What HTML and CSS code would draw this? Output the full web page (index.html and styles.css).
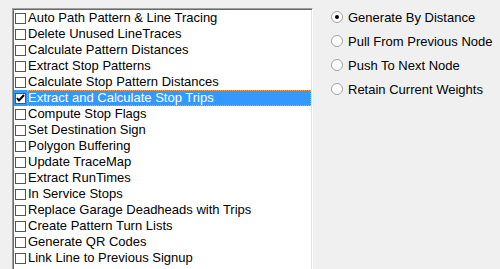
FILE: index.html
```html
<!DOCTYPE html>
<html>
<head>
<meta charset="utf-8">
<link rel="stylesheet" href="styles.css">
</head>
<body>
<div class="window">
  <div class="listbox">
    <div class="item"><span class="cb"></span><span class="label">Auto Path Pattern &amp; Line Tracing</span></div>
    <div class="item"><span class="cb"></span><span class="label">Delete Unused LineTraces</span></div>
    <div class="item"><span class="cb"></span><span class="label">Calculate Pattern Distances</span></div>
    <div class="item"><span class="cb"></span><span class="label">Extract Stop Patterns</span></div>
    <div class="item"><span class="cb"></span><span class="label">Calculate Stop Pattern Distances</span></div>
    <div class="item selected"><span class="cb checked"><svg width="9" height="9" viewBox="0 0 9 9"><path d="M1 4 L3 6.5 L8 1" fill="none" stroke="#000" stroke-width="2"/></svg></span><span class="label focus">Extract and Calculate Stop Trips</span></div>
    <div class="item"><span class="cb"></span><span class="label">Compute Stop Flags</span></div>
    <div class="item"><span class="cb"></span><span class="label">Set Destination Sign</span></div>
    <div class="item"><span class="cb"></span><span class="label">Polygon Buffering</span></div>
    <div class="item"><span class="cb"></span><span class="label">Update TraceMap</span></div>
    <div class="item"><span class="cb"></span><span class="label">Extract RunTimes</span></div>
    <div class="item"><span class="cb"></span><span class="label">In Service Stops</span></div>
    <div class="item"><span class="cb"></span><span class="label">Replace Garage Deadheads with Trips</span></div>
    <div class="item"><span class="cb"></span><span class="label">Create Pattern Turn Lists</span></div>
    <div class="item"><span class="cb"></span><span class="label">Generate QR Codes</span></div>
    <div class="item"><span class="cb"></span><span class="label">Link Line to Previous Signup</span></div>
  </div>
  <div class="radios">
    <div class="radio"><span class="rb"><svg width="12" height="12" viewBox="0 0 12 12"><circle cx="6" cy="6" r="5.5" fill="#fff" stroke="#a0a0a0"/><circle cx="6" cy="6" r="2" fill="#000"/></svg></span><span>Generate By Distance</span></div>
    <div class="radio"><span class="rb"><svg width="12" height="12" viewBox="0 0 12 12"><circle cx="6" cy="6" r="5.5" fill="#fff" stroke="#a0a0a0"/></svg></span><span>Pull From Previous Node</span></div>
    <div class="radio"><span class="rb"><svg width="12" height="12" viewBox="0 0 12 12"><circle cx="6" cy="6" r="5.5" fill="#fff" stroke="#a0a0a0"/></svg></span><span>Push To Next Node</span></div>
    <div class="radio"><span class="rb"><svg width="12" height="12" viewBox="0 0 12 12"><circle cx="6" cy="6" r="5.5" fill="#fff" stroke="#a0a0a0"/></svg></span><span>Retain Current Weights</span></div>
  </div>
</div>
</body>
</html>
```

FILE: styles.css
```css
html, body {
  margin: 0;
  padding: 0;
  background: #f0f0f0;
  overflow: hidden;
}
body {
  width: 500px;
  height: 269px;
  font-family: "Liberation Sans", Arial, sans-serif;
  font-size: 13px;
  color: #000;
}
.window {
  display: flex;
  align-items: flex-start;
  height: 269px;
  overflow: hidden;
}
.listbox {
  margin-left: 12px;
  margin-top: 8px;
  width: 297px;
  height: 260px;
  overflow: hidden;
  background: #fff;
  border: 1px solid;
  border-bottom: none;
  border-color: #a0a0a0 #fff #fff #a0a0a0;
  box-shadow: inset 1px 1px 0 #696969, inset -1px 0 0 #e3e3e3;
  padding: 1px 1px 0 1px;
  display: flex;
  flex-direction: column;
}
.item {
  height: 16px;
  flex: none;
  display: flex;
  align-items: center;
  white-space: nowrap;
}
.cb {
  width: 11px;
  height: 11px;
  box-sizing: border-box;
  border: 1px solid #555;
  background: #fff;
  margin-left: 1px;
  margin-right: 1px;
  display: flex;
  align-items: center;
  justify-content: center;
  flex: none;
}
.label {
  line-height: 16px;
  padding-left: 1px;
}
.selected {
  background: #3399ff;
  color: #fff;
}
.focus {
  flex: 1;
  outline: 1px dotted #f0a050;
  outline-offset: -1px;
}
.radios {
  margin-left: 18px;
  padding-top: 11px;
  display: flex;
  flex-direction: column;
  gap: 12px;
}
.radio {
  display: flex;
  align-items: center;
  height: 12px;
  white-space: nowrap;
}
.rb {
  width: 12px;
  height: 12px;
  margin-right: 5px;
  display: flex;
}
```
